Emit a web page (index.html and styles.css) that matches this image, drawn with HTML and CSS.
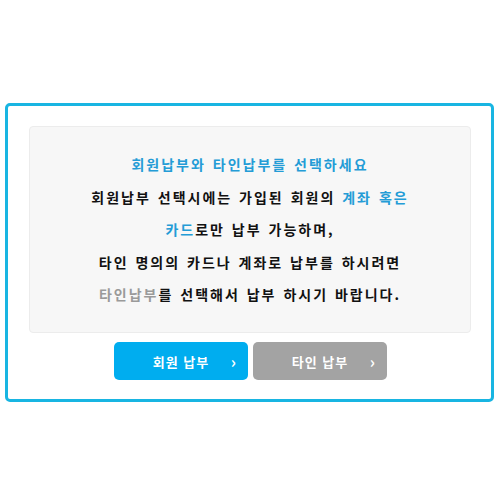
FILE: index.html
```html
<!DOCTYPE html>
<html lang="ko">
<head>
<meta charset="utf-8">
<link rel="stylesheet" href="styles.css">
</head>
<body>
<div class="panel">
  <div class="notice">
    <p class="line"><span class="blue">회원납부와 타인납부를 선택하세요</span></p>
    <p class="line">회원납부 선택시에는 가입된 회원의 <span class="blue">계좌 혹은</span></p>
    <p class="line"><span class="blue">카드</span>로만 납부 가능하며,</p>
    <p class="line">타인 명의의 카드나 계좌로 납부를 하시려면</p>
    <p class="line"><span class="gray">타인납부</span>를 선택해서 납부 하시기 바랍니다.</p>
  </div>
  <div class="buttons">
    <a class="btn btn-blue">회원 납부<span class="arrow">›</span></a>
    <a class="btn btn-gray">타인 납부<span class="arrow">›</span></a>
  </div>
</div>
</body>
</html>
```
FILE: styles.css
```css
html, body {
  margin: 0;
  padding: 0;
  background: #fff;
}
body {
  font-family: "Noto Sans CJK KR", "Noto Sans", sans-serif;
}
.panel {
  box-sizing: border-box;
  width: 489px;
  margin: 103px 0 0 5px;
  border: 3px solid #18b5e2;
  border-radius: 5px;
  padding: 20px 20px 19px 21px;
}
.notice {
  box-sizing: border-box;
  height: 207px;
  background: #f7f7f7;
  border: 1px solid #ececec;
  border-radius: 4px;
  padding: 21px 0;
  text-align: center;
}
.line {
  margin: 0;
  line-height: 32.5px;
  font-size: 14px;
  font-weight: 700;
  letter-spacing: 2px;
  word-spacing: 1px;
  color: #111;
}
.blue { color: #249cd6; }
.gray { color: #9a9a9a; }
.buttons {
  display: flex;
  justify-content: center;
  gap: 5px;
  margin-top: 9px;
  padding-left: 1px;
}
.btn {
  position: relative;
  width: 134px;
  height: 38px;
  border-radius: 5px;
  color: #fff;
  font-size: 13px;
  font-weight: 700;
  letter-spacing: 1px;
  display: flex;
  align-items: center;
  justify-content: center;
}
.btn-blue { background: #00adef; }
.btn-gray { background: #a3a3a3; }
.arrow {
  position: absolute;
  right: 11px;
  top: 9px;
  font-size: 16px;
  font-weight: 700;
  line-height: 20px;
}
```
